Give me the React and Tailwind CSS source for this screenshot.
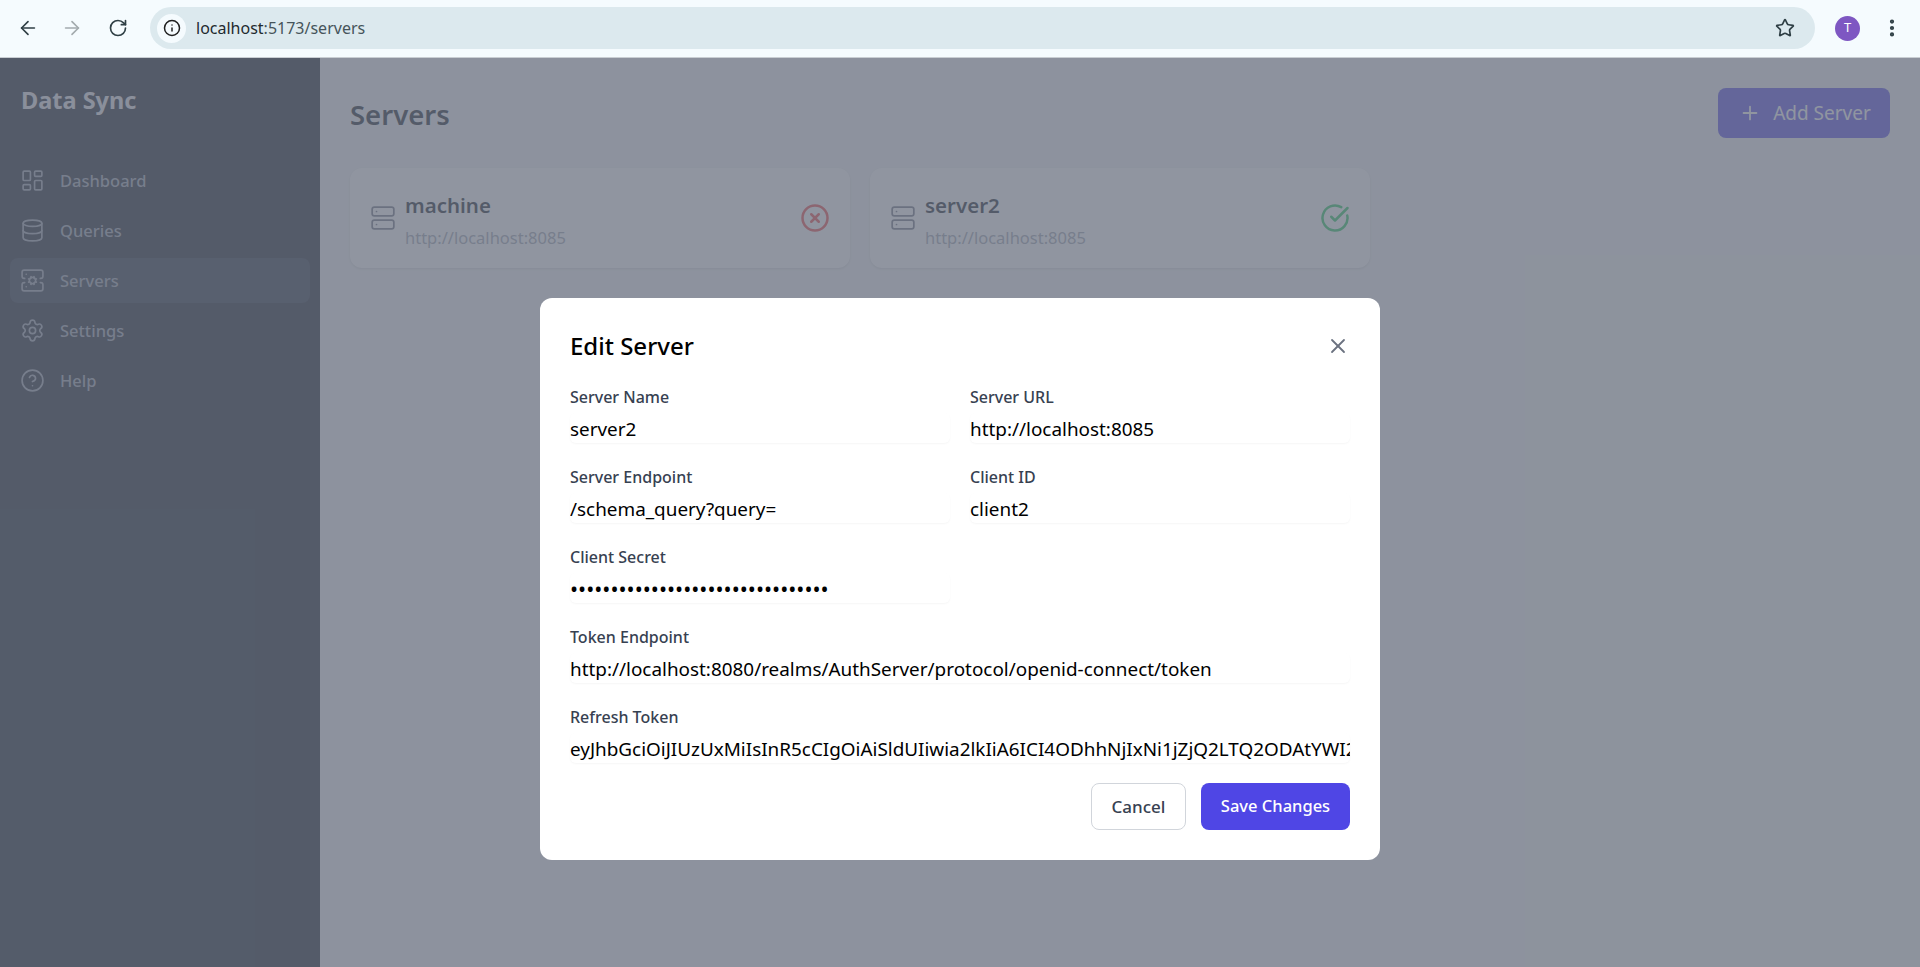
import React from "react";
import {
  ArrowLeft,
  ArrowRight,
  RotateCw,
  Info,
  Star,
  EllipsisVertical,
  LayoutDashboard,
  Database,
  ServerCog,
  Settings,
  CircleHelp,
  Server,
  CircleX,
  CircleCheckBig,
  Plus,
  X,
} from "lucide-react";

const navItems = [
  { label: "Dashboard", icon: LayoutDashboard },
  { label: "Queries", icon: Database },
  { label: "Servers", icon: ServerCog, active: true },
  { label: "Settings", icon: Settings },
  { label: "Help", icon: CircleHelp },
];

const servers = [
  { name: "machine", url: "http://localhost:8085", ok: false },
  { name: "server2", url: "http://localhost:8085", ok: true },
];

function BrowserBar() {
  return (
    <div className="h-[58px] shrink-0 flex items-center bg-[#f5fbfe] border-b border-[#c9ced3] pb-px text-[#2f3f45]">
      <div className="w-[150px] shrink-0 flex items-center pl-[17px] gap-[22px]">
        <ArrowLeft size={22} strokeWidth={1.8} />
        <ArrowRight size={22} strokeWidth={1.8} className="text-[#a3abae]" />
        <RotateCw size={20} strokeWidth={2} className="ml-[3px]" />
      </div>
      <div className="w-[1665px] h-[42px] rounded-full bg-[#dce9ee] flex items-center pl-[7px] pr-[20px]">
        <div className="w-[29px] h-[29px] rounded-full bg-[#f5fbfe] flex items-center justify-center">
          <Info size={18} strokeWidth={2} className="text-[#1f1f1f]" />
        </div>
        <span className="ml-[10px] text-[16px] text-[#1f2a2e]">
          localhost<span className="text-[#46545a]">:5173/servers</span>
        </span>
        <Star size={20} strokeWidth={2} className="ml-auto" />
      </div>
      <div className="w-[25px] h-[25px] ml-[20px] rounded-full bg-[#7e57c2] text-white text-[13px] flex items-center justify-center">
        T
      </div>
      <EllipsisVertical size={22} strokeWidth={2.6} className="ml-[21px]" />
    </div>
  );
}

function Sidebar() {
  return (
    <aside className="w-[320px] shrink-0 bg-[#111827] text-[#9ca3af] px-[10px]">
      <h1 className="pt-[19px] pl-[11px] text-[23.5px] leading-[46px] font-bold text-[#e5e7eb]">Data Sync</h1>
      <nav className="mt-[35px] flex flex-col gap-[5px]">
        {navItems.map((item) => {
          const Icon = item.icon;
          return (
            <div
              key={item.label}
              className={`h-[45px] flex items-center gap-[15px] pl-[10px] rounded-lg text-[16.5px] font-medium ${
                item.active ? "bg-[#232d3d]" : ""
              }`}
            >
              <Icon size={25} strokeWidth={1.6} />
              <span className="mt-[2px]">{item.label}</span>
            </div>
          );
        })}
      </nav>
    </aside>
  );
}

function ServerCard({ server }) {
  return (
    <div className="h-[100px] bg-white rounded-xl shadow-sm px-[20px] flex items-center">
      <Server size={26} strokeWidth={1.6} className="text-[#6b7280]" />
      <div className="ml-[9px] flex-1 pt-[5px]">
        <div className="text-[20.5px] leading-[30px] font-semibold text-[#111827]">{server.name}</div>
        <div className="text-[16.5px] leading-[26px] text-[#9ca3af] mt-[5px]">{server.url}</div>
      </div>
      {server.ok ? (
        <CircleCheckBig size={30} strokeWidth={2} className="text-[#22c55e]" />
      ) : (
        <CircleX size={30} strokeWidth={2} className="text-[#ef4444]" />
      )}
    </div>
  );
}

function Field({ label, value, type = "text", className = "" }) {
  return (
    <label className={`block ${className}`}>
      <span className="block text-[16px] leading-[24px] font-medium text-[#374151]">{label}</span>
      <input
        readOnly
        type={type}
        value={value}
        className={`mt-[4px] block w-full h-[30px] pt-[2px] rounded-md shadow-[0_1px_2px_rgba(0,0,0,0.04)] bg-white text-black outline-none ${
          type === "password" ? "text-[21.5px]" : "text-[18.9px]"
        }`}
      />
    </label>
  );
}

function EditModal() {
  return (
    <div className="absolute inset-0 bg-[#6b7280]/75 flex justify-center items-start pt-[240px]">
      <div className="w-[840px] h-[562px] bg-white rounded-xl px-[30px] pt-[30px]">
        <div className="flex items-center justify-between h-[36px]">
          <h2 className="text-[24px] font-medium text-black">Edit Server</h2>
          <X size={24} strokeWidth={1.8} className="text-[#6b7280]" />
        </div>
        <div className="mt-[21px] grid grid-cols-2 gap-x-[20px] gap-y-[22px]">
          <Field label="Server Name" value="server2" />
          <Field label="Server URL" value="http://localhost:8085" />
          <Field label="Server Endpoint" value="/schema_query?query=" />
          <Field label="Client ID" value="client2" />
          <Field label="Client Secret" type="password" value="abcdefghijklmnopqrstuvwxyz012345" />
          <div />
          <Field
            className="col-span-2"
            label="Token Endpoint"
            value="http://localhost:8080/realms/AuthServer/protocol/openid-connect/token"
          />
          <Field
            className="col-span-2"
            label="Refresh Token"
            value="eyJhbGciOiJIUzUxMiIsInR5cCIgOiAiSldUIiwia2lkIiA6ICI4ODhhNjIxNi1jZjQ2LTQ2ODAtYWI2ZTEtNDk0Mi1hNjQx"
          />
        </div>
        <div className="mt-[20px] flex justify-end gap-[15px]">
          <button className="w-[95px] h-[47px] rounded-lg border border-[#d1d5db] bg-white text-[17px] font-medium text-[#374151]">
            Cancel
          </button>
          <button className="w-[149px] h-[47px] rounded-lg bg-[#4f46e5] text-[16.5px] font-medium text-white">
            Save Changes
          </button>
        </div>
      </div>
    </div>
  );
}

export default function App() {
  return (
    <div className="h-[967px] flex flex-col overflow-hidden font-['Noto_Sans',sans-serif]">
      <BrowserBar />
      <div className="relative flex-1 flex min-h-0">
        <Sidebar />
        <main className="flex-1 bg-[#f3f4f6] px-[30px] pt-[30px]">
          <div className="flex items-center justify-between h-[50px]">
            <h2 className="text-[27.5px] font-semibold text-[#111827] mt-[3px]">Servers</h2>
            <button className="w-[172px] h-[50px] rounded-lg bg-[#4f46e5] text-white text-[19px] flex items-center justify-center gap-[12px] pl-[2px]">
              <Plus size={22} strokeWidth={2} />
              Add Server
            </button>
          </div>
          <div className="mt-[30px] grid grid-cols-3 gap-[20px]">
            {servers.map((s) => (
              <ServerCard key={s.name} server={s} />
            ))}
          </div>
        </main>
        <EditModal />
      </div>
    </div>
  );
}
